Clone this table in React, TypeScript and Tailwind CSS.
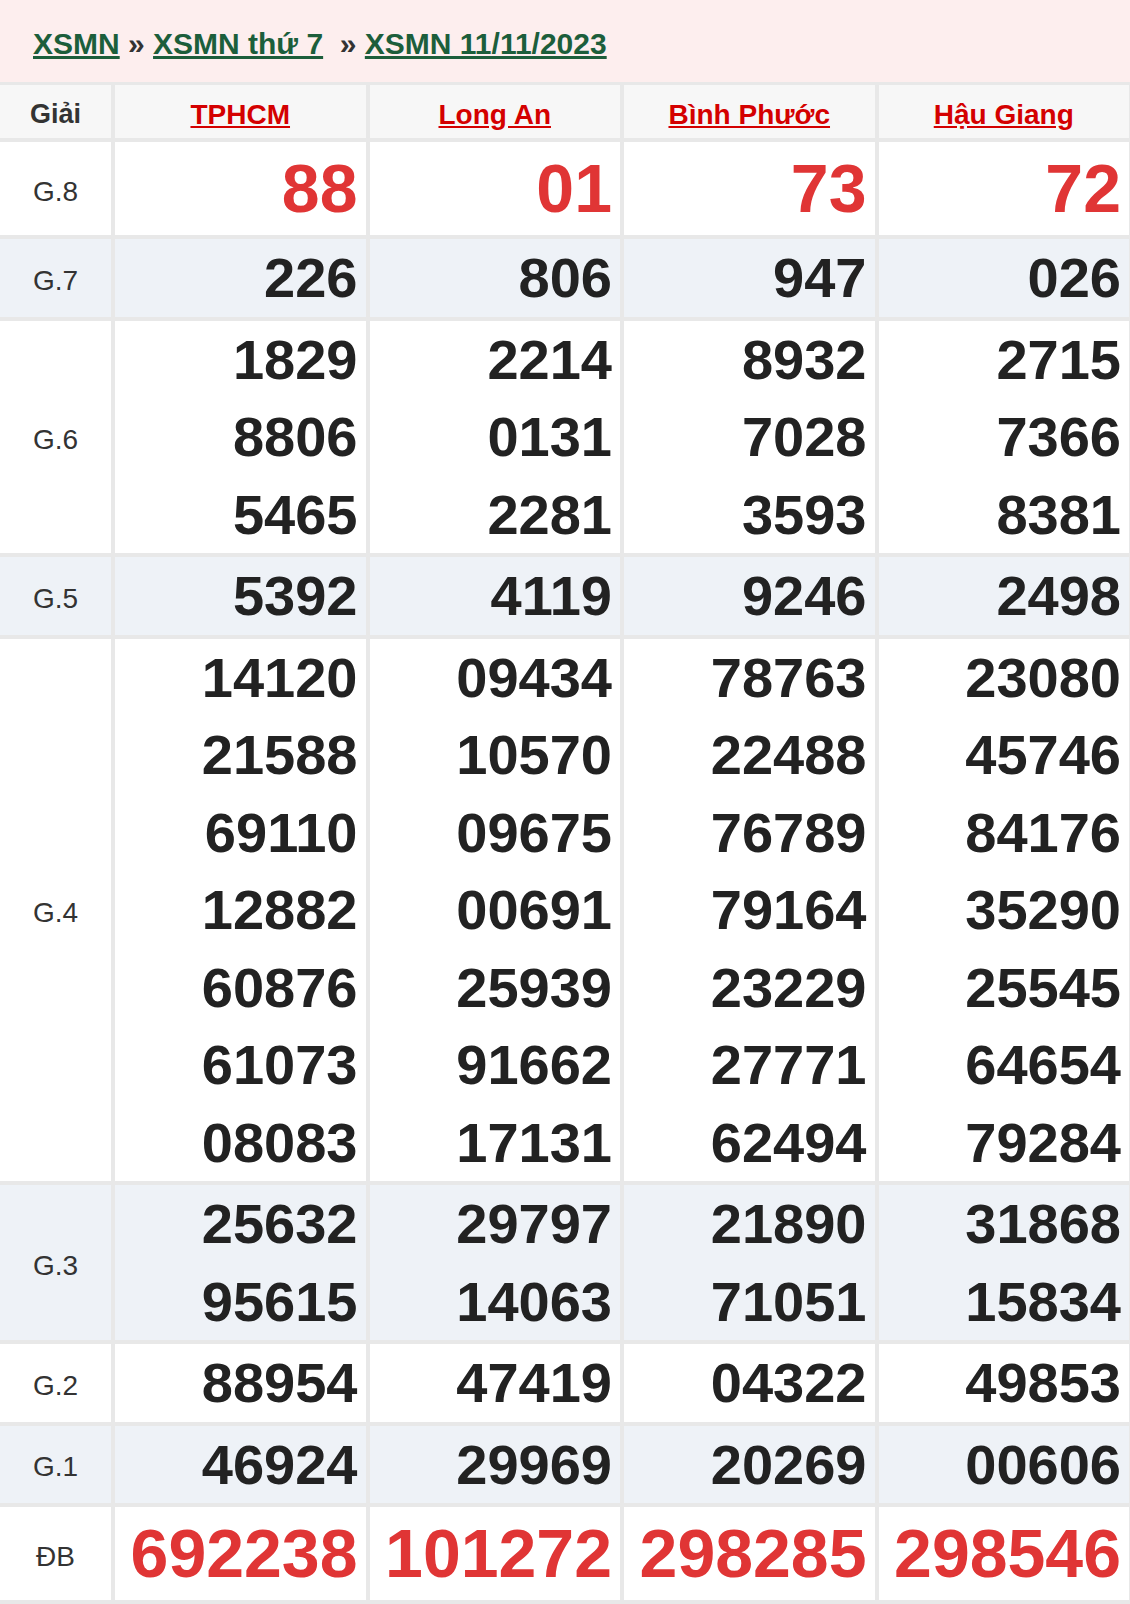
import React from "react";

type Row = { label: string; values: string[][]; tall?: boolean; red?: boolean; alt?: boolean };

const rows: Row[] = [
  { label: "G.8", values: [["88"], ["01"], ["73"], ["72"]], tall: true, red: true },
  { label: "G.7", values: [["226"], ["806"], ["947"], ["026"]], alt: true },
  {
    label: "G.6",
    values: [
      ["1829", "8806", "5465"],
      ["2214", "0131", "2281"],
      ["8932", "7028", "3593"],
      ["2715", "7366", "8381"],
    ],
  },
  { label: "G.5", values: [["5392"], ["4119"], ["9246"], ["2498"]], alt: true },
  {
    label: "G.4",
    values: [
      ["14120", "21588", "69110", "12882", "60876", "61073", "08083"],
      ["09434", "10570", "09675", "00691", "25939", "91662", "17131"],
      ["78763", "22488", "76789", "79164", "23229", "27771", "62494"],
      ["23080", "45746", "84176", "35290", "25545", "64654", "79284"],
    ],
  },
  {
    label: "G.3",
    values: [
      ["25632", "95615"],
      ["29797", "14063"],
      ["21890", "71051"],
      ["31868", "15834"],
    ],
    alt: true,
  },
  { label: "G.2", values: [["88954"], ["47419"], ["04322"], ["49853"]] },
  { label: "G.1", values: [["46924"], ["29969"], ["20269"], ["00606"]], alt: true },
  { label: "ĐB", values: [["692238"], ["101272"], ["298285"], ["298546"]], tall: true, red: true },
];

const provinces = ["TPHCM", "Long An", "Bình Phước", "Hậu Giang"];

export default function App() {
  return (
    <div className="w-[1130px] font-['Liberation_Sans',Arial,sans-serif] bg-white">
      <div className="h-[82px] bg-[#fdeeee] pl-[33px] pt-[5px] flex items-center text-[30px] font-bold text-[#333] whitespace-pre">
        <a href="#" className="text-[#1c5e3b] underline">XSMN</a>
        <span> » </span>
        <a href="#" className="text-[#1c5e3b] underline">XSMN thứ 7</a>
        <span>{"  » "}</span>
        <a href="#" className="text-[#1c5e3b] underline">XSMN 11/11/2023</a>
      </div>
      <div className="grid grid-cols-[111px_repeat(4,1fr)] gap-[4px] bg-[#e8e8e8] pt-[3px] pr-[1px] pb-[4px]">
        <div className="h-[53px] bg-[#f7f7f7] pt-[6px] flex items-center justify-center text-[27px] font-bold text-[#333]">
          Giải
        </div>
        {provinces.map((p) => (
          <div key={p} className="h-[53px] bg-[#f7f7f7] pt-[6px] flex items-center justify-center text-[28px] font-bold">
            <a href="#" className="text-[#d40000] underline">{p}</a>
          </div>
        ))}
        {rows.map((r) => (
          <React.Fragment key={r.label}>
            <div
              className={`flex items-center justify-center pt-[6px] text-[28px] text-[#333] ${
                r.alt ? "bg-[#eef2f7]" : "bg-white"
              }`}
            >
              {r.label}
            </div>
            {r.values.map((col, i) => (
              <div
                key={i}
                className={`flex flex-col items-end justify-center pr-[8px] font-bold ${
                  r.alt ? "bg-[#eef2f7]" : "bg-white"
                } ${r.tall ? "h-[93px]" : ""}`}
              >
                {col.map((n, j) => (
                  <div
                    key={j}
                    className={
                      r.red
                        ? "text-[68px] leading-[93px] text-[#e03535]"
                        : "text-[56px] leading-[77.5px] text-[#222]"
                    }
                  >
                    {n}
                  </div>
                ))}
              </div>
            ))}
          </React.Fragment>
        ))}
      </div>
    </div>
  );
}
